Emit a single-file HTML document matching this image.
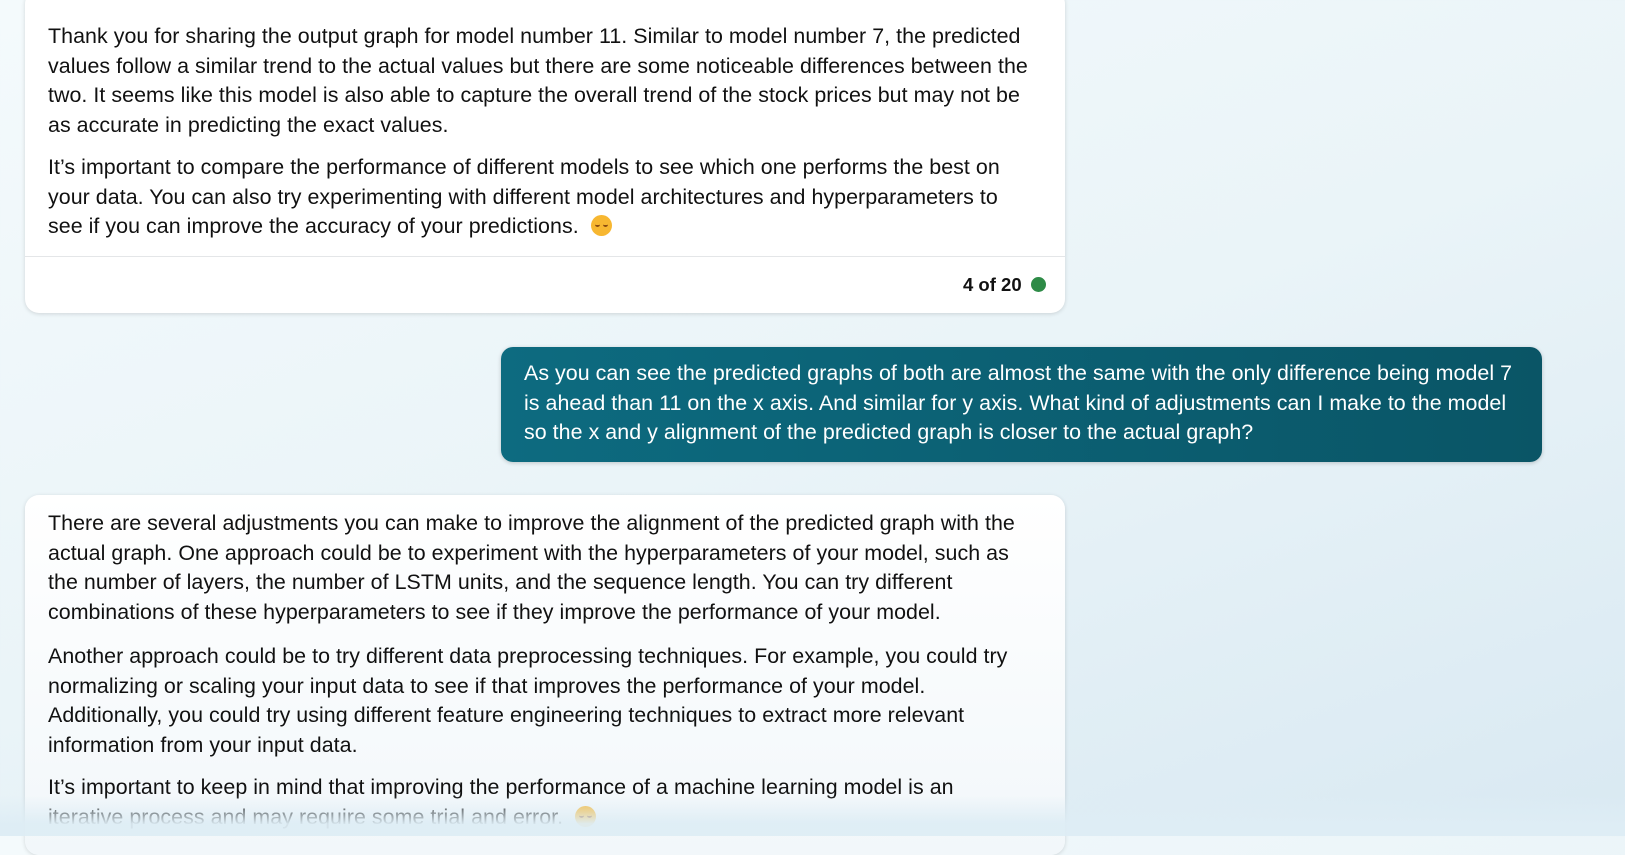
<!DOCTYPE html>
<html><head><meta charset="utf-8"><style>
*{margin:0;padding:0;box-sizing:border-box}
body{width:1625px;height:836px;overflow:hidden;position:relative;font-family:"Liberation Sans",sans-serif;color:#111;
background:linear-gradient(160deg,#f4fafc 0%,#eaf4f8 50%,#d9e9f2 100%);}
.card{position:absolute;left:25px;width:1040px;background:#fff;border-radius:14px;box-shadow:0 1px 4px rgba(0,0,0,.14);}
.t{position:absolute;left:48px;font-size:21.4px;letter-spacing:0.05px;white-space:nowrap;line-height:29.5px}
.u{position:absolute;left:501px;top:347px;width:1041px;height:115px;border-radius:12px;
background:linear-gradient(90deg,#0d6b80,#0a5566);box-shadow:0 1px 4px rgba(0,0,0,.2)}
.ut{position:absolute;left:524px;color:#fff;font-size:21.4px;letter-spacing:0.05px;white-space:nowrap;line-height:29.5px}
.fade{position:absolute;left:0;top:795px;width:1625px;height:41px;background:linear-gradient(180deg,rgba(225,239,246,0),rgba(222,237,245,.95) 70%)}
.em{display:inline-block;width:21px;height:21px;border-radius:50%;background:#f7b731;vertical-align:-3px;position:relative}
.em:before{content:"";position:absolute;left:4px;top:7px;width:5px;height:3px;border-bottom:2px solid #8a4b10;border-radius:0 0 50% 50%}
.em:after{content:"";position:absolute;left:12px;top:7px;width:5px;height:3px;border-bottom:2px solid #8a4b10;border-radius:0 0 50% 50%}
</style></head><body>
<div class="card" style="top:-10px;height:323px"></div>
<div style="position:absolute;left:25px;top:256px;width:1040px;height:1px;background:#e4e6e8"></div>
<div class="t" style="top:22px">Thank you for sharing the output graph for model number 11. Similar to model number 7, the predicted<br>values follow a similar trend to the actual values but there are some noticeable differences between the<br>two. It seems like this model is also able to capture the overall trend of the stock prices but may not be<br>as accurate in predicting the exact values.</div>
<div class="t" style="top:153px">It’s important to compare the performance of different models to see which one performs the best on<br>your data. You can also try experimenting with different model architectures and hyperparameters to<br>see if you can improve the accuracy of your predictions.&nbsp; <span class="em"></span></div>
<div style="position:absolute;left:963px;top:274px;font-size:18.5px;font-weight:bold">4 of 20</div>
<div style="position:absolute;left:1031px;top:277px;width:15px;height:15px;border-radius:50%;background:#2e8b47"></div>
<div class="u"></div>
<div class="ut" style="top:359px">As you can see the predicted graphs of both are almost the same with the only difference being model 7<br>is ahead than 11 on the x axis. And similar for y axis. What kind of adjustments can I make to the model<br>so the x and y alignment of the predicted graph is closer to the actual graph?</div>
<div class="card" style="top:495px;height:360px;background:linear-gradient(180deg,#fff,#f2f7fa)"></div>
<div class="t" style="top:509px">There are several adjustments you can make to improve the alignment of the predicted graph with the<br>actual graph. One approach could be to experiment with the hyperparameters of your model, such as<br>the number of layers, the number of LSTM units, and the sequence length. You can try different<br>combinations of these hyperparameters to see if they improve the performance of your model.</div>
<div class="t" style="top:642px">Another approach could be to try different data preprocessing techniques. For example, you could try<br>normalizing or scaling your input data to see if that improves the performance of your model.<br>Additionally, you could try using different feature engineering techniques to extract more relevant<br>information from your input data.</div>
<div class="t" style="top:773px">It’s important to keep in mind that improving the performance of a machine learning model is an<br>iterative process and may require some trial and error.&nbsp; <span class="em"></span></div>
<div class="fade"></div>
</body></html>
